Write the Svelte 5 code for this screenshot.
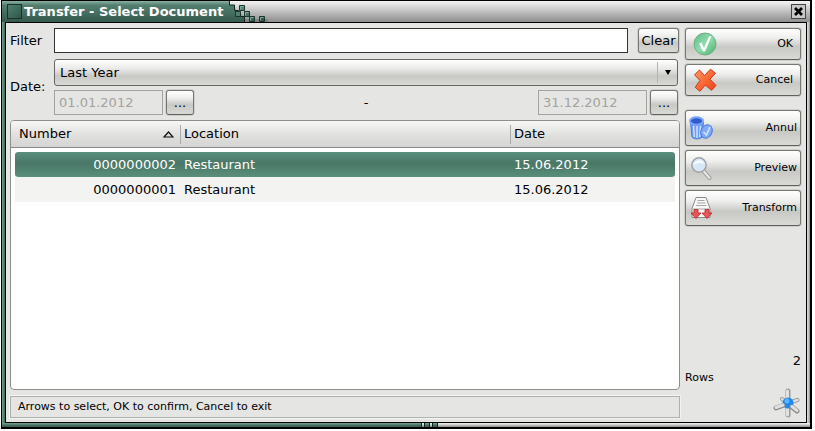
<script>
  let filter = $state('');
  let period = $state('Last Year');
  let selected = $state(0);
  const rows = [
    { number: '0000000002', location: 'Restaurant', date: '15.06.2012' },
    { number: '0000000001', location: 'Restaurant', date: '15.06.2012' }
  ];
</script>

<div class="window">
  <header class="titlebar">
    <div class="caption"><span class="menu-box"></span><h1>Transfer - Select Document</h1></div>
    <svg class="blocks" width="42" height="21" viewBox="0 0 42 21" aria-hidden="true">
      <defs>
        <linearGradient id="cap" x1="0" y1="0" x2="0" y2="1"><stop offset="0" stop-color="#8ab0a2" /><stop offset=".2" stop-color="#547f70" /><stop offset="1" stop-color="#34594d" /></linearGradient>
        <linearGradient id="cube" x1="0" y1="0" x2="1" y2="1"><stop offset="0" stop-color="#5f9482" /><stop offset="1" stop-color="#2c5145" /></linearGradient>
      </defs>
      <path d="M6 6l6 6 6 6h22v3H12L2 9z" fill="#555" opacity=".3" />
      <path d="M0 0h1v4h5v6h5v6h6v5H0z" fill="url(#cap)" />
      <path d="M1.500 0v4h5v5.500h4v6h6V21" fill="none" stroke="#12261f" />
      <g fill="url(#cube)" stroke="#1a352c">
        <path d="M11.500 4.500h5v5h-5zM7.500 10.500h5v5h-5zM16.500 10.500h5v5h-5zM21.500 15.500h5v5h-5zM31.500 15.500h5v5h-5z" />
      </g>
      <path d="M12.500 8.500v-3h3M17.500 14.500v-3h3M22.500 19.500v-3h3M32.500 19.500v-3h3" fill="none" stroke="#7fae9d" />
    </svg>
    <button class="close" aria-label="Close">
      <svg width="9" height="9" viewBox="0 0 9 9"><path d="M1 1l7 7M8 1l-7 7" stroke="#000" stroke-width="2.800" /></svg>
    </button>
  </header>

  <div class="body">
    <main>
      <div class="row filter">
        <label for="filter">Filter</label>
        <input id="filter" type="text" bind:value={filter} />
        <button class="btn clear" onclick={() => (filter = '')}>Clear</button>
      </div>
      <div class="row dates">
        <label for="period">Date:</label>
        <div class="range">
          <div class="combo">
            <select id="period" bind:value={period}><option>Last Year</option></select>
            <span class="arrow"></span>
          </div>
          <div class="between">
            <input type="text" value="01.01.2012" aria-label="From" disabled />
            <button class="btn dots" aria-label="Choose start date">...</button>
            <span class="dash">-</span>
            <input type="text" value="31.12.2012" aria-label="To" disabled />
            <button class="btn dots" aria-label="Choose end date">...</button>
          </div>
        </div>
      </div>
      <div class="list">
        <table>
          <thead>
            <tr>
              <th class="num"><span class="sort">Number
                <svg width="11" height="7" viewBox="0 0 11 7" aria-hidden="true"><path d="M1 6L5.500 1L10 6z" fill="none" stroke="#111" stroke-width="1.200" /></svg></span></th>
              <th class="loc">Location</th>
              <th class="date">Date</th>
            </tr>
          </thead>
          <tbody>
            {#each rows as row, i}
              <tr class:selected={selected === i} onclick={() => (selected = i)}>
                <td class="num">{row.number}</td>
                <td>{row.location}</td>
                <td>{row.date}</td>
              </tr>
            {/each}
          </tbody>
        </table>
      </div>
      <div class="status">Arrows to select, OK to confirm, Cancel to exit</div>
    </main>

    <aside>
      <button class="btn action short">
        <svg width="24" height="24" viewBox="0 0 24 24">
          <defs><linearGradient id="ok" x1="0" y1="0" x2="1" y2="1"><stop offset="0" stop-color="#63b887" /><stop offset=".5" stop-color="#8fdcae" /><stop offset="1" stop-color="#4fae6b" /></linearGradient></defs>
          <circle cx="12" cy="12" r="11" fill="url(#ok)" stroke="#6fae83" />
          <path d="M6 11.500l2.500-1 2.500 5.500L16 4.500l2.500-.5-6.500 15.500h-2z" fill="#fff" />
        </svg>
        <span>OK</span>
      </button>
      <button class="btn action short">
        <svg width="24" height="24" viewBox="0 0 24 24">
          <defs><linearGradient id="no" x1="0" y1="0" x2="1" y2="1"><stop offset="0" stop-color="#ff9a66" /><stop offset=".5" stop-color="#fb6a35" /><stop offset="1" stop-color="#f0400f" /></linearGradient></defs>
          <path d="M6.500 2l5 5.500L17.500 1.200l5 4-5.500 6 6 6.300-4.500 4.800-6.300-5.300-5.200 6.300-4.800-4L7 12.500 1.500 6.800z" fill="url(#no)" stroke="#c43a1d" stroke-linejoin="round" />
        </svg>
        <span>Cancel</span>
      </button>
      <button class="btn action annul">
        <svg width="24" height="24" viewBox="0 0 24 24">
          <path d="M1.500 6l1.500 15c2 2.500 8 2.500 10 0l1.500-15z" fill="#6d9dfa" stroke="#4a79e0" />
          <path d="M4.500 10l.8 11M8 10v12M11.500 10l-.8 11" stroke="#cfe0ff" stroke-width="1.500" />
          <ellipse cx="7.500" cy="5" rx="6.500" ry="3.800" fill="#2f5cc8" stroke="#7ba4fb" stroke-width="2" />
          <ellipse cx="17.500" cy="15.500" rx="5.500" ry="7" fill="#7eabfc" stroke="#4a79e0" transform="rotate(25 17.500 15.500)" />
          <path d="M14.500 16l3 3 3.500-8" fill="none" stroke="#d8e7ff" stroke-width="1.500" />
        </svg>
        <span>Annul</span>
      </button>
      <button class="btn action">
        <svg width="24" height="24" viewBox="0 0 24 24">
          <path d="M14.500 15l6 7" stroke="#999" stroke-width="4" stroke-linecap="round" />
          <path d="M14.500 15l6 7" stroke="#e8e8e8" stroke-width="2" stroke-linecap="round" />
          <circle cx="10" cy="9" r="7.200" fill="#d6e8f7" stroke="#a2a2a2" stroke-width="1.500" />
          <path d="M5 9c0-6 10-6 10-1-4-2-7-1-10 1z" fill="#f3faff" />
        </svg>
        <span>Preview</span>
      </button>
      <button class="btn action">
        <svg width="24" height="24" viewBox="0 0 24 24">
          <path d="M7 1.500h10l4 11v9H3v-9z" fill="#f8f8f8" stroke="#8a8a8a" />
          <path d="M8.500 4.500h7M8 7h8.500M7 9.500h10.500M3.500 13h17" stroke="#a5a5a5" />
          <path d="M5 13.500h4V17h3l-5 5.500L2 17h3zM16 13.500h4V17h3l-5 5.500-5-5.500h3z" fill="#ee5555" stroke="#b3222a" stroke-width=".8" />
        </svg>
        <span>Transform</span>
      </button>
      <div class="spacer"></div>
      <div class="count">2</div>
      <div class="caption-rows">Rows</div>
      <svg class="logo" width="28" height="30" viewBox="0 0 28 30" aria-hidden="true">
        <g stroke-linecap="round" fill="none">
          <path d="M14 15L9 11M15 15l9.500-3" stroke="#8f8f8f" stroke-width="4" /><path d="M14 15L9 11M15 15l9.500-3" stroke="#ddd" stroke-width="2.500" />
          <path d="M15 3v24" stroke="#999" stroke-width="5" /><path d="M14.500 3v24" stroke="#e2e2e2" stroke-width="3" />
        </g>
        <circle cx="15" cy="15" r="5.500" fill="#1b87f3" /><circle cx="14" cy="13" r="2.500" fill="#5fb2ff" />
        <g stroke-linecap="round" fill="none">
          <path d="M10 17.500l-7 2.500M19 19l5 4" stroke="#8c8c8c" stroke-width="5" /><path d="M10 17l-7 2.500M19 18.500l5 4" stroke="#e0e0e0" stroke-width="3" />
        </g>
      </svg>
    </aside>
  </div>
  <div class="bottom-edge"><span></span><i></i><i></i></div>
</div>

<style>
  :global(body) { margin: 0; background: #fff; }
  * { box-sizing: border-box; }
  .window {
    display: flex; flex-direction: column; height: calc(100vh - 2px); margin: 0 3px 0 1px;
    border: solid #000; border-width: 1px 2px 2px 1px;
    background: linear-gradient(90deg, #76a292, #4b7768 2px, #34594d 4px, #d4d4d4 4px, #d4d4d4 calc(100% - 2px), #8e8e8e);
    font: 13px/16px "DejaVu Sans", sans-serif; color: #000;
  }
  .titlebar { display: flex; height: 21px; flex: none; background: linear-gradient(#f4f4f4, #d4d4d4 30%, #8e8e8e); align-items: center; }
  .caption { display: flex; align-items: center; gap: 2px; height: 21px; padding: 0 5px; background: linear-gradient(#8ab0a2, #547f70 20%, #34594d); }
  .menu-box { width: 15px; height: 15px; border: 1px solid #15342b; background: linear-gradient(135deg, #4f8070, #2f5649); }
  h1 { margin: 0; font-size: 13px; line-height: 16px; color: #fff; }
  .blocks { flex: none; }
  .close { display: flex; align-items: center; justify-content: center; width: 15px; height: 15px; margin: 0 4px 0 auto; padding: 0; border: 1px solid #444; background: #c8c8c8; }
  .body { display: flex; flex: 1; min-height: 0; gap: 5px; margin: 0 3px 0 3px; border: 1px solid #000; background: #e5e5e3; padding: 5px 5px 4px 4px; }
  main { display: flex; flex: 1; min-width: 0; flex-direction: column; }
  .row { display: flex; align-items: center; }
  label { width: 44px; flex: none; }
  input { min-width: 0; font: inherit; padding: 0 4px; border: 1px solid #333; background: #fff; border-radius: 0; }
  .btn { font: inherit; color: #000; border: 1px solid #777873; border-bottom-color: #60615c; border-radius: 3px; background: linear-gradient(#fff, #eeefed 30%, #c8c9c5 60%, #d9dad6); padding: 0; box-shadow: 0 0 0 1px #cfcfcc; }
  .filter { height: 25px; }
  .filter input { flex: 1; height: 25px; margin-right: 10px; }
  .clear { width: 41px; height: 25px; margin-right: 1px; }
  .dates { margin-top: 6px; }
  .range { flex: 1; min-width: 0; margin-right: 2px; }
  .combo { position: relative; }
  select { appearance: none; width: 100%; height: 27px; padding: 0 5px; display: block; font: inherit; color: #000; border: 1px solid #666762; border-radius: 3px; background: linear-gradient(#fff, #e9eae7 35%, #c8c9c5 65%, #d9dad6); }
  .arrow { position: absolute; right: 0; top: 3px; width: 21px; height: 21px; border-left: 1px solid #b4b4b1; pointer-events: none; }
  .arrow::after { content: ''; position: absolute; left: 7px; top: 8px; border: solid transparent; border-width: 5px 3px 0; border-top-color: #000; }
  .between { display: flex; margin-top: 4px; gap: 3px; }
  .between input { width: 109px; height: 25px; border: 1px solid #a3a3a0; background: #e5e5e3; color: #a3a3a0; }
  .dots { width: 28px; height: 25px; }
  .dash { flex: 1; text-align: center; line-height: 25px; }
  .list { flex: 1; min-height: 0; margin-top: 5px; border: 1px solid #8e8f8b; border-radius: 4px; background: #fff; overflow: hidden; }
  table { width: 100%; border-spacing: 0; table-layout: fixed; }
  th { height: 27px; padding: 0 2px; font-weight: normal; text-align: left; background: linear-gradient(#f7f7f6, #dededc 60%, #d4d4d2); border-bottom: 1px solid #888; }
  th.num { width: 169px; padding: 0 6px 0 8px; }
  th.date { width: 169px; }
  .loc, .date { background: linear-gradient(#aaa, #aaa) 0 4px / 1px 19px no-repeat, linear-gradient(#f7f7f6, #dededc 60%, #d4d4d2); padding-left: 4px; }
  .sort { display: flex; justify-content: space-between; align-items: center; }
  td { height: 25px; padding: 0 4px; background: #f3f3f2; background-clip: padding-box; }
  td.num { text-align: right; }
  tbody::before { content: ''; display: table-row; height: 4px; }
  tbody td:first-child { border-left: 4px solid transparent; }
  tbody td:last-child { border-right: 4px solid transparent; }
  .selected td { color: #fff; background: linear-gradient(#5a907e, #4a7767 45%, #598f7b) padding-box; box-shadow: none; }
  .selected td:first-child { border-radius: 7px 0 0 7px / 3px 0 0 3px; }
  .selected td:last-child { border-radius: 0 7px 7px 0 / 0 3px 3px 0; }
  .status { height: 22px; margin: 6px 0 0; padding: 1px 7px; border: 1px solid #b0b0ae; box-shadow: 0 0 0 1px #f3f3f1; font-size: 11px; line-height: 18px; }
  aside { display: flex; flex: none; flex-direction: column; width: 116px; gap: 4px; }
  .action { display: flex; flex: none; align-items: center; justify-content: space-between; width: 100%; height: 36px; padding: 0 3px; font-size: 11px; }
  .short { height: 32px; padding: 0 7px; }
  .annul { margin-top: 10px; }
  .spacer { flex: 1; }
  .count { text-align: right; line-height: 13px; }
  .caption-rows { font-size: 11px; line-height: 13px; }
  .logo { align-self: flex-end; }
  .bottom-edge { display: flex; height: 4px; flex: none; background: linear-gradient(#f2f2f2, #c8c8c8 50%, #888); }
  .bottom-edge span, .bottom-edge i { background: linear-gradient(#76a292, #4b7768 50%, #34594d); border-right: 1px solid #10241d; }
  .bottom-edge span { width: 52%; }
  .bottom-edge i { width: 6px; margin-left: 2px; border-left: 1px solid #10241d; }
</style>
